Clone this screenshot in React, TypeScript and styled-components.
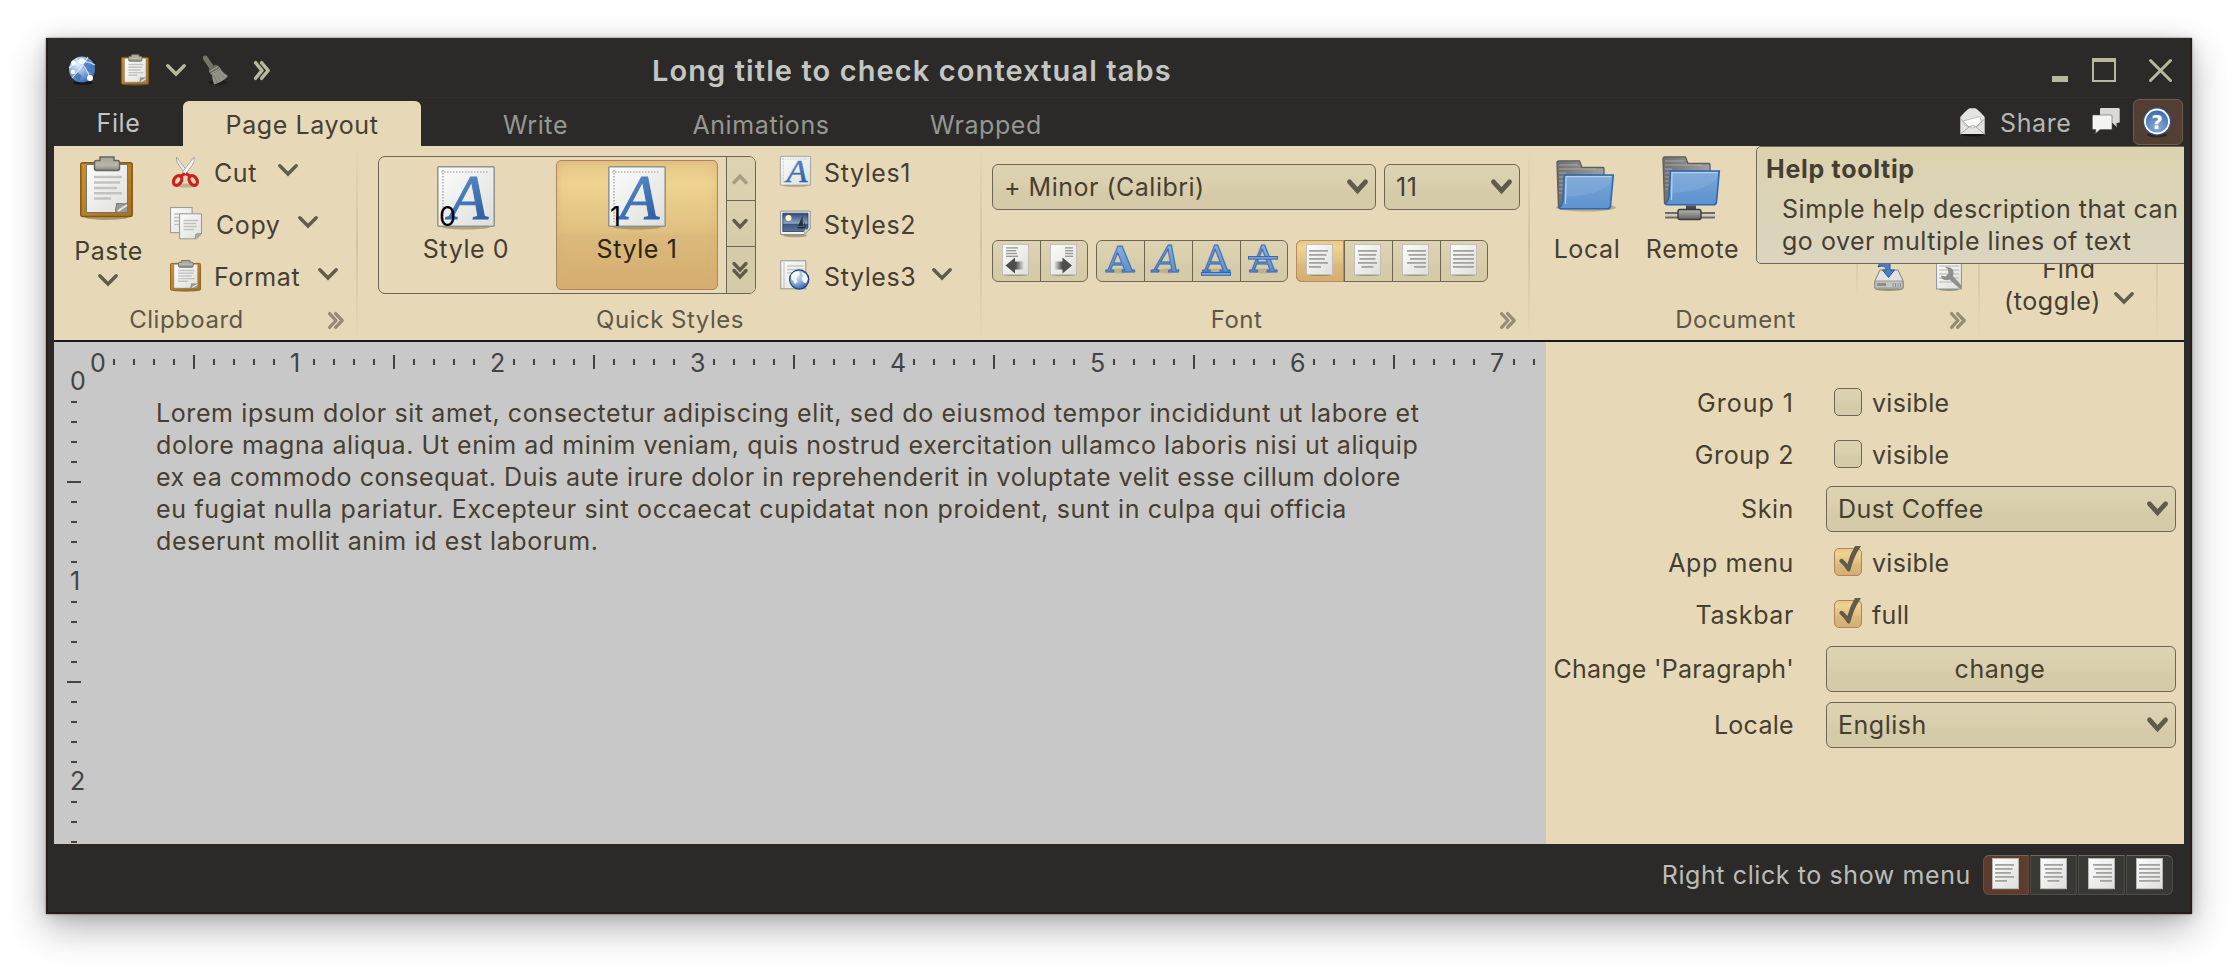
import React from "react";
import styled, { createGlobalStyle, css } from "styled-components";

const c = {
  frame: "#2b2a28",
  sand: "#e7d9b8",
  ink: "#463e31",
  inkSoft: "#5f5747",
  line: "#6e6553",
  arrow: "#615b4c",
  olive: "#b9b89c",
};

const GlobalStyle = createGlobalStyle`
  body {
    margin: 0;
    background: #fff;
    font-family: Inter, "Liberation Sans", sans-serif;
    font-size: 25px;
    line-height: 30px;
    letter-spacing: 0.6px;
    color: ${c.ink};
    overflow: hidden;
  }
  svg { display: block; flex: none; overflow: visible; }
`;

const raised = css`
  background: linear-gradient(#ddd2b1, #dbd0ae 40%, #d6cba8 65%, #d6cba9);
`;
const pressed = css`
  background: linear-gradient(#e6c887, #efd390 18%, #e0c080 55%, #dbba7d 58%, #d5ad6f);
`;

/* ---------- window frame ---------- */

const Desktop = styled.div`
  width: 2238px;
  height: 968px;
  box-sizing: border-box;
  padding: 38px 46px 54px;
`;
const Window = styled.main`
  height: 876px;
  box-sizing: border-box;
  padding: 0 6px;
  display: flex;
  flex-direction: column;
  background: ${c.frame};
  border: solid #261d18;
  border-width: 0 2px 2px;
  box-shadow: 0 14px 36px rgba(0, 0, 0, 0.3), 0 2px 14px rgba(0, 0, 0, 0.12), 0 0 2px rgba(0, 0, 0, 0.5);
`;

const TitleBar = styled.header`
  height: 60px;
  box-sizing: border-box;
  padding: 5px 12px 0 14px;
  display: flex;
  align-items: center;
  border-bottom: 1px solid #2f2e2c;
`;
const QuickTools = styled.div`
  width: 584px;
  display: grid;
  grid-template-columns: 53px 45px 35px 53px 16px;
  align-items: center;
`;
const Title = styled.h1`
  margin: 2px 0 0;
  font-size: 29px;
  line-height: 36px;
  font-weight: 600;
  letter-spacing: 1.1px;
  color: #c4c6c3;
`;
const WindowButtons = styled.div`
  margin-left: auto;
  display: grid;
  grid-template-columns: 40px 57px 23px;
`;

const TabRow = styled.nav`
  height: 48px;
  display: flex;
  align-items: flex-end;
`;
const Tab = styled.div<{ $w: number; $active?: boolean; $file?: boolean }>`
  width: ${(p) => p.$w}px;
  height: 45px;
  box-sizing: border-box;
  padding-top: ${(p) => (p.$file ? 7 : 9)}px;
  text-align: center;
  color: ${(p) => (p.$active ? c.ink : p.$file ? "#c3c5c2" : "#979793")};
  background: ${(p) => (p.$active ? c.sand : "transparent")};
  border-radius: 6px 6px 0 0;
`;
const TabTools = styled.div`
  margin-left: auto;
  height: 48px;
  display: flex;
  padding-right: 1px;
`;
const Share = styled.div`
  display: flex;
  align-items: flex-start;
  gap: 15px;
  padding-top: 10px;
  width: 132px;
  color: #b4b7b4;
`;
const Comments = styled.div`
  width: 41px;
  padding-top: 10px;
`;
const HelpButton = styled.div`
  width: 50px;
  height: 46px;
  margin-top: 1px;
  box-sizing: border-box;
  border: 1.5px solid #6f5b50;
  border-radius: 6px;
  background: linear-gradient(#513d33, #553f35 60%, #50402f);
  padding: 7px 0 0 8px;
`;

/* ---------- ribbon ---------- */

const Ribbon = styled.section`
  position: relative;
  overflow: hidden;
  height: 194px;
  display: flex;
  background: ${c.sand};
`;
const Group = styled.div<{ $w: number }>`
  width: ${(p) => p.$w}px;
  display: flex;
  flex-direction: column;
  background: linear-gradient(rgba(200, 184, 146, 0), #d2c5a0 50%, rgba(200, 184, 146, 0)) right / 2px 100% no-repeat;
`;
const GroupBody = styled.div<{ $pad?: number }>`
  height: 158px;
  padding-left: ${(p) => p.$pad ?? 0}px;
  display: flex;
`;
const GroupFooter = styled.div<{ $launcher?: boolean }>`
  display: flex;
  height: 32px;
  align-items: center;
  gap: 9px;
  padding-right: ${(p) => (p.$launcher ? 14 : 0)}px;
`;
const GroupLabel = styled.div`
  flex: 1;
  text-align: center;
  font-size: 24px;
  letter-spacing: 0.5px;
  color: ${c.inkSoft};
`;
const LauncherSlot = styled.div`
  width: 16px;
`;

const BigButton = styled.div<{ $w: number; $gap: number }>`
  width: ${(p) => p.$w}px;
  padding-top: 10px;
  display: flex;
  flex-direction: column;
  align-items: center;
  & > svg:first-child { margin-right: 3px; }
  & > span { margin: ${(p) => p.$gap}px 0 8px 1px; }
`;
const Stack = styled.div`
  display: flex;
  flex-direction: column;
  padding: 1px 0 0 8px;
`;
const StackItem = styled.div<{ $icon?: number; $arrowGap?: number }>`
  height: 52px;
  display: flex;
  align-items: center;
  & > svg:first-child { width: ${(p) => p.$icon ?? 31}px; margin: -3px 13px 0 0; }
  & > svg + span + svg { margin: -6px 0 0 ${(p) => p.$arrowGap ?? 17}px; }
`;

const Gallery = styled.div`
  width: 378px;
  height: 138px;
  box-sizing: border-box;
  margin: 10px 16px 0 20px;
  border: 1.5px solid ${c.line};
  border-radius: 7px;
  display: flex;
  overflow: hidden;
`;
const GalleryItem = styled.div<{ $on?: boolean }>`
  flex: none;
  width: 162px;
  height: 130px;
  box-sizing: border-box;
  margin: 3px 8px 0 0;
  border-radius: 5px;
  border: 1px solid transparent;
  padding-top: 5px;
  display: flex;
  flex-direction: column;
  align-items: center;
  ${(p) =>
    p.$on &&
    css`
      ${pressed}
      border-color: #b08460;
      color: #2c2414;
      box-shadow: inset 0 0 10px rgba(214, 174, 112, 0.7);
    `}
  &:first-child { margin: 3px 9px 0 6px; }
`;
const Thumb = styled.div`
  position: relative;
  width: 58px;
  height: 68px;
`;
const ThumbDigit = styled.span`
  position: absolute;
  left: 2px;
  top: 36px;
  color: #000;
  font-size: 27px;
`;
const GalleryScroll = styled.div`
  flex: 1;
  display: grid;
  grid-template-rows: 43px 46px 1fr;
  justify-items: center;
  align-items: center;
  border-left: 1.5px solid ${c.line};
  ${raised}
  & > div { width: 100%; height: 100%; display: grid; place-items: center; box-sizing: border-box; padding-right: 2px; }
  & > div + div { border-top: 1.5px solid ${c.line}; }
`;

const FontControls = styled.div`
  display: flex;
  flex-direction: column;
  gap: 30px;
  padding-top: 18px;
`;
const ControlRow = styled.div`
  display: flex;
  gap: 8px;
`;
const Field = styled.div<{ $w: number; $center?: boolean }>`
  width: ${(p) => p.$w}px;
  height: 46px;
  box-sizing: border-box;
  border: 1.5px solid ${c.line};
  border-radius: 6px;
  padding: 0 7px 1px ${(p) => (p.$center ? 5 : 11)}px;
  display: flex;
  align-items: center;
  justify-content: ${(p) => (p.$center ? "center" : "space-between")};
  letter-spacing: 0.5px;
  ${raised}
`;
const ButtonStrip = styled.div`
  height: 42px;
  box-sizing: border-box;
  display: flex;
  border: 1.5px solid ${c.line};
  border-radius: 6px;
  ${raised}
`;
const StripButton = styled.div<{ $on?: boolean }>`
  flex: none;
  width: 48px;
  box-sizing: border-box;
  padding: 3px 2px 0 0;
  display: flex;
  justify-content: center;
  &:first-child { width: ${(p) => (p.$on ? 48 : 47)}px; }
  &:last-child { width: 47px; }
  & + & { border-left: 1.5px solid ${c.line}; }
  ${(p) =>
    p.$on &&
    css`
      ${pressed}
      margin: -1px 0 -1px -1px;
      padding-top: 4px;
      border-radius: 6px 0 0 6px;
      box-shadow: inset 0 0 0 1px #b98a62;
    `}
`;

const DocTools = styled.div`
  margin-left: 115px;
  height: 154px;
  display: flex;
  align-items: flex-end;
  background: linear-gradient(rgba(200, 184, 146, 0), #cfc19c 60%, rgba(200, 184, 146, 0)) left / 2px 100% no-repeat;
  box-sizing: border-box;
  padding: 0 0 9px 18px;
  gap: 32px;
`;
const FindButton = styled.div`
  width: 100%;
  padding-top: 107px;
  display: flex;
  flex-direction: column;
  align-items: center;
`;
const FindLine = styled.div`
  display: flex;
  align-items: center;
  gap: 13px;
  height: 32px;
  & > svg { margin-top: -6px; }
`;

const Tooltip = styled.aside`
  position: absolute;
  left: 1702px;
  top: 0;
  width: 460px;
  height: 118px;
  box-sizing: border-box;
  border: 1.5px solid #6f6958;
  border-radius: 5px;
  padding: 7px 0 0 9px;
  background: linear-gradient(#dbd2ae, #dbd4b7 50%, #dbd5c1);
`;
const TooltipTitle = styled.div`
  font-weight: 700;
  letter-spacing: 0.7px;
`;
const TooltipText = styled.div`
  padding: 9px 0 0 16px;
  line-height: 32px;
  letter-spacing: 0.52px;
  white-space: nowrap;
`;

/* ---------- editor ---------- */

const Workspace = styled.section`
  flex: 1;
  display: flex;
  border-top: 2px solid #1b1a1c;
  overflow: hidden;
`;
const Page = styled.div`
  width: 1492px;
  background: #c8c8c8;
  overflow: hidden;
`;
const HRuler = styled.div`
  height: 30px;
  box-sizing: border-box;
  padding: 10px 0 0 30px;
  display: flex;
  align-items: center;
  color: #434343;
`;
const HCell = styled.div<{ $size: "number" | "big" | "small" }>`
  flex: none;
  width: 20px;
  display: flex;
  justify-content: center;
  ${(p) =>
    p.$size === "number"
      ? css`justify-content: flex-start; box-sizing: border-box; padding: 1px 0 0 6px; height: 30px;`
      : css`
          &::after { content: ""; width: 2px; height: ${p.$size === "big" ? 14 : 6}px; background: #434343; }
        `}
`;
const PageBody = styled.div`
  display: flex;
`;
const VRuler = styled.div`
  width: 102px;
  height: 472px;
  color: #434343;
`;
const VCell = styled.div<{ $size: "number" | "big" | "small" }>`
  height: 20px;
  display: flex;
  align-items: center;
  box-sizing: border-box;
  padding-left: ${(p) => (p.$size === "big" ? 13 : p.$size === "small" ? 17 : 16)}px;
  ${(p) =>
    p.$size === "number"
      ? css`line-height: 30px; padding-bottom: 2px;`
      : css`
          &::after { content: ""; height: 2px; width: ${p.$size === "big" ? 14 : 6}px; background: #434343; }
        `}
`;
const Paragraph = styled.div`
  padding-top: 25px;
  white-space: nowrap;
`;
const Line = styled.div<{ $track: number }>`
  line-height: 32px;
  letter-spacing: ${(p) => p.$track}px;
`;

const Settings = styled.form`
  flex: 1;
  margin: 0;
  background: ${c.sand};
  padding: 34px 8px 0 0;
  display: grid;
  grid-template-columns: 248px 350px;
  column-gap: 32px;
  grid-template-rows: 52px 52px 58px 48px 56px 54px 58px;
  align-content: start;
  align-items: center;
`;
const Label = styled.label<{ $field?: boolean; $track?: number }>`
  text-align: right;
  white-space: nowrap;
  letter-spacing: ${(p) => p.$track ?? 0.6}px;
  padding-top: ${(p) => (p.$field ? 0 : 2)}px;
`;
const CheckRow = styled.div`
  display: flex;
  align-items: center;
  gap: 10px;
  padding-left: 8px;
  letter-spacing: 0.3px;
  & > span { padding-top: 2px; }
`;
const Box = styled.div<{ $on?: boolean }>`
  width: 28px;
  height: 28px;
  box-sizing: border-box;
  border: 1.5px solid ${(p) => (p.$on ? "#b08460" : c.line)};
  border-radius: 5px;
  ${(p) => (p.$on ? pressed : raised)}
`;

/* ---------- status bar ---------- */

const StatusBar = styled.footer`
  height: 68px;
  box-sizing: border-box;
  padding: 11px 11px 0 0;
  display: flex;
  justify-content: flex-end;
  gap: 12px;
  color: #bbbdb9;
`;
const StatusText = styled.div`
  padding-top: 5px;
`;
const StatusStrip = styled.div`
  height: 40px;
  display: flex;
  gap: 1px;
`;
const StatusButton = styled.div<{ $on?: boolean }>`
  width: 47px;
  box-sizing: border-box;
  border: 1px solid ${(p) => (p.$on ? "#6b4b3d" : "#4e4d48")};
  border-top-color: #6d675f;
  background: ${(p) => (p.$on ? "#5e3c2d" : "#383834")};
  padding: 2px 0 0 9px;
  &:first-child { border-radius: 6px 0 0 6px; width: 46px; padding-left: 8px; }
  &:last-child { border-radius: 0 6px 6px 0; }
`;

/* ---------- drawings ---------- */

const Defs = () => (
  <svg width="0" height="0" style={{ position: "absolute" }}>
    <defs>
      <linearGradient id="paper" x1="0" y1="0" x2="1" y2="1">
        <stop offset="0" stopColor="#fdfdfd" /><stop offset="1" stopColor="#dededc" />
      </linearGradient>
      <linearGradient id="board" x1="0" y1="0" x2="1" y2="1">
        <stop offset="0" stopColor="#cd8f32" /><stop offset="1" stopColor="#a8701a" />
      </linearGradient>
      <linearGradient id="clip" x1="0" y1="0" x2="0" y2="1">
        <stop offset="0" stopColor="#a6a595" /><stop offset=".6" stopColor="#b9b8a8" /><stop offset="1" stopColor="#83837a" />
      </linearGradient>
      <linearGradient id="blueA" x1="0" y1="0" x2="0" y2="1">
        <stop offset="0" stopColor="#93b7e3" /><stop offset="1" stopColor="#5488cc" />
      </linearGradient>
      <linearGradient id="deepA" x1="0" y1="0" x2="0.4" y2="1">
        <stop offset="0" stopColor="#6a9bd4" /><stop offset="1" stopColor="#2c5fa3" />
      </linearGradient>
      <linearGradient id="folder" x1="0" y1="0" x2="0" y2="1">
        <stop offset="0" stopColor="#7ba7d6" /><stop offset="1" stopColor="#5c92cf" />
      </linearGradient>
      <linearGradient id="steel" x1="0" y1="0" x2="1" y2="0">
        <stop offset="0" stopColor="#6f6f6f" /><stop offset="1" stopColor="#a0a0a0" />
      </linearGradient>
      <linearGradient id="steelV" x1="0" y1="0" x2="0" y2="1">
        <stop offset="0" stopColor="#b5b5b5" /><stop offset="1" stopColor="#636363" />
      </linearGradient>
      <radialGradient id="sea" cx=".35" cy=".3" r=".8">
        <stop offset="0" stopColor="#e2eefb" /><stop offset=".5" stopColor="#86aedd" /><stop offset="1" stopColor="#2a5ba6" />
      </radialGradient>
      <radialGradient id="help" cx=".5" cy=".75" r=".8">
        <stop offset="0" stopColor="#88add8" /><stop offset="1" stopColor="#2f5f9f" />
      </radialGradient>
      <linearGradient id="sky" x1="0" y1="0" x2="0" y2="1">
        <stop offset="0" stopColor="#2c4574" /><stop offset=".55" stopColor="#8fa5c4" /><stop offset=".6" stopColor="#3b567f" /><stop offset="1" stopColor="#5c7699" />
      </linearGradient>
      <linearGradient id="fadeL"><stop offset="0" stopColor="#4d4e49" /><stop offset=".55" stopColor="#4d4e49" /><stop offset="1" stopColor="#4d4e49" stopOpacity="0" /></linearGradient>
      <linearGradient id="fadeR"><stop offset="0" stopColor="#4d4e49" stopOpacity="0" /><stop offset=".45" stopColor="#4d4e49" /><stop offset="1" stopColor="#4d4e49" /></linearGradient>
    </defs>
  </svg>
);

const Chevron = ({ color = c.arrow }: { color?: string }) => (
  <svg width="20" height="12" viewBox="0 0 20 12" fill="none" stroke={color} strokeWidth="3.4" strokeLinecap="round">
    <path d="M1.8 1.8 10 10 18.2 1.8" />
  </svg>
);
const FieldArrow = () => (
  <svg width="21" height="15" viewBox="0 0 21 15" fill="none" stroke={c.arrow} strokeWidth="4.8" strokeLinecap="round">
    <path d="M2.5 2.8 10.5 11.6 18.5 2.8" />
  </svg>
);
const More = ({ color, size = 17 }: { color: string; size?: number }) => (
  <svg width={16} height={size} viewBox="0 0 16 17" fill="none" stroke={color} strokeWidth="3.3" strokeLinecap="round" strokeLinejoin="round" preserveAspectRatio="none">
    <path d="M1.6 1.6 8 8.5 1.6 15.4M7.600 1.6 14.2 8.5 7.600 15.4" />
  </svg>
);
const Clipboard = ({ w, h }: { w: number; h: number }) => (
  <svg width={w} height={h} viewBox="0 0 53 64" preserveAspectRatio="none">
    <ellipse cx="26.5" cy="61" rx="22" ry="3" fill="#6b5a35" opacity=".5" />
    <rect x=".8" y="6.8" width="51.4" height="53.6" rx="2" fill="url(#board)" stroke="#835714" strokeWidth="1.5" />
    <path d="M6.5 8.5H47.5V48L39 56.5H6.5Z" fill="url(#paper)" stroke="#76736a" />
    <path d="M36 56.5H47.5V47C44 49 40 47 36.5 47.5 37 51 34.5 53 36 56.5Z" fill="#9a9a96" stroke="#77756d" />
    <path d="M38 55 47 49" stroke="#e8e8e6" strokeWidth="2" />
    <path d="M14 21H42M14 26.500H40M14 32H37M14 37.200H42M14 42.500H31" stroke="#c3c3c2" strokeWidth="2.6" />
    <path d="M20 1H34V4.500H37.500Q39.500 4.500 39.500 6.500V12.500Q39.500 14.500 37.500 14.500H16.500Q14.500 14.500 14.500 12.500V6.500Q14.500 4.500 16.500 4.500H20Z" fill="url(#clip)" stroke="#66655c" strokeWidth="1.5" />
  </svg>
);
const Scissors = () => (
  <svg width="31" height="32" viewBox="0 0 31 32">
    <ellipse cx="16" cy="29.500" rx="10" ry="2" fill="#8d8160" opacity=".45" />
    <path d="M6.500 1Q5.500 5 9 9.500L16 19 18 16Z" fill="#e9e9e8" stroke="#989894" strokeWidth=".8" />
    <path d="M24 1Q25.500 5 22 9.500L14.500 19.500 12.500 16Z" fill="#f4f4f3" stroke="#989894" strokeWidth=".8" />
    <g fill="none" stroke="#cc1f1f" strokeWidth="3.200">
      <ellipse cx="7.600" cy="24.500" rx="3.700" ry="5.200" transform="rotate(32 7.600 24.500)" />
      <ellipse cx="23.200" cy="24.500" rx="3.700" ry="5.200" transform="rotate(-32 23.200 24.500)" />
      <path d="M11 20 15 17.500M19.800 20 15.800 17.500" />
    </g>
  </svg>
);
const CopyIcon = () => (
  <svg width="33" height="33" viewBox="0 0 33 33">
    <rect x=".6" y=".6" width="21.500" height="25" fill="url(#paper)" stroke="#97968f" />
    <path d="M4 7H12M4 10.500H11M4 14H12M4 17.500H10" stroke="#c0c0be" strokeWidth="1.500" />
    <path d="M9.600 6.800H31.500V27L26.500 31.800H9.600Z" fill="url(#paper)" stroke="#97968f" />
    <path d="M25 31.500 26 27 31 26.500Z" fill="#b5b5b1" stroke="#8a8a84" strokeWidth=".8" />
    <path d="M13.500 13.500H28M13.500 16.500H26M13.500 19.500H27M13.500 22.500H24" stroke="#c0c0be" strokeWidth="1.500" />
  </svg>
);
const Globe = () => (
  <svg width="30" height="30" viewBox="0 0 30 30">
    <ellipse cx="15" cy="28" rx="10" ry="1.800" fill="#000" opacity=".5" />
    <circle cx="14" cy="14.500" r="13" fill="url(#sea)" />
    <path d="M15 8 20 4.500 25 8 26.500 13 23 17.500 19 16 15 12ZM5 20 10 17.500 14 21 11.500 25.500Q7 24 5 20Z" fill="#3d71b8" opacity=".75" />
    <path d="M1 13Q14 2 27 10M4 23Q14 12 20 2M8 4Q20 12 22 25" fill="none" stroke="#e6f0fc" strokeWidth="1.100" opacity=".85" />
    <g fill="#fff"><circle cx="5.500" cy="8" r="2.400" /><circle cx="14" cy="6" r="2.800" /><circle cx="22" cy="23" r="3" /><circle cx="5" cy="17" r="2.200" /></g>
  </svg>
);
const Broom = () => (
  <svg width="28" height="31" viewBox="0 0 28 31">
    <ellipse cx="17" cy="27.500" rx="10" ry="2.500" fill="#111" opacity=".5" />
    <path d="M2.500 1Q5.500-.5 6.500 2L13.500 12 9 14.500 2 4Q1.500 2 2.500 1Z" fill="#787468" />
    <path d="M8 13.500 14.500 9.500Q19 11 20.500 15L11 20.500Q7.500 18 8 13.500Z" fill="#6c695e" />
    <path d="M11 19 19.500 14.500Q23 18.500 27 21 22 27 13 29.500 11 24 11 19Z" fill="#96938a" />
    <path d="M13 20 16 28M15.500 19 20 26.500M18 17.500 24 23.500" stroke="#7f7c72" strokeWidth="1" />
    <path d="M8.500 16.500 17 11.500M10 18.500 19 13.500" stroke="#a5a298" strokeWidth="1" />
  </svg>
);
const StyleIcon = ({ w = 58, h = 64 }: { w?: number; h?: number }) => (
  <svg width={w} height={h} viewBox="0 0 58 64" preserveAspectRatio="none">
    <ellipse cx="29" cy="61" rx="24" ry="2.500" fill="#7c6d45" opacity=".5" />
    <rect x=".8" y=".8" width="56.400" height="59.400" rx="1" fill="url(#paper)" stroke="#8f9390" strokeWidth="1.500" />
    <path d="M4 6H52M6 4V56" stroke="#9a9a9a" strokeWidth="1.200" strokeDasharray="1.500 1.500" fill="none" />
    <text x="12" y="53" fontFamily="Liberation Serif" fontStyle="italic" fontSize="64" letterSpacing="0" fill="url(#deepA)" stroke="url(#deepA)" strokeWidth="1.100">A</text>
  </svg>
);
const PictureIcon = () => (
  <svg width="31" height="28" viewBox="0 0 31 28">
    <ellipse cx="15" cy="25.500" rx="12" ry="1.800" fill="#6c6145" opacity=".5" />
    <path d="M.6 1.100H30.200V19L24.500 24.500H.6Z" fill="#f4f4f2" stroke="#8f8f88" />
    <path d="M2.800 3.200H28V18L23.500 21.500H2.800Z" fill="url(#sky)" stroke="#263e66" strokeWidth=".8" />
    <circle cx="8.500" cy="8" r="3" fill="#fbfbc9" />
    <path d="M18 16 22.500 6 23 16ZM23.500 10 26 17H17L18 18.500H25" fill="#26303f" />
    <path d="M24 24.500 25 19.500 30 19Z" fill="#ddd" stroke="#999" strokeWidth=".7" />
  </svg>
);
const WebDocIcon = () => (
  <svg width="31" height="31" viewBox="0 0 31 31">
    <rect x=".8" y=".8" width="25" height="28" fill="url(#paper)" stroke="#96968f" />
    <path d="M4 2V28M7 6H23M7 9.500H23M7 13H23" stroke="#c9c9c7" strokeWidth="1.300" />
    <circle cx="19.200" cy="19.500" r="9.600" fill="url(#sea)" stroke="#2a3e80" strokeWidth="1.200" />
    <path d="M11 15 14 12 19 11 20 13.500 17.500 17 16 18 17.500 22 15 24 13.500 21 11 18.500ZM21 12 26 14 28 19 26 23.500 23 22 21.500 18 23 16Z" fill="#f4f8fd" />
  </svg>
);
type Align = "left" | "center" | "right" | "justify";
const widths = [19, 17.5, 16, 19, 12];
const DocIcon = ({ align }: { align: Align }) => (
  <svg width="27" height="32" viewBox="0 0 27 32">
    <ellipse cx="13.500" cy="30.800" rx="12" ry="1.300" fill="#4a452f" opacity=".45" />
    <rect x=".4" y=".4" width="26.200" height="30.400" fill="url(#paper)" stroke="#b8b8b4" strokeWidth=".8" />
    {widths.map((v, i) => {
      const w = align === "justify" ? 21 : v;
      const x = align === "right" ? 24 - w : align === "center" ? 13.5 - w / 2 : 3;
      return <rect key={i} x={x} y={6 + i * 4} width={w} height="1.800" fill="#a3a3a2" />;
    })}
  </svg>
);
const IndentIcon = ({ dir }: { dir: "left" | "right" }) => (
  <svg width="27" height="32" viewBox="0 0 27 32">
    <ellipse cx="13.500" cy="30.800" rx="12" ry="1.300" fill="#4a452f" opacity=".45" />
    <rect x=".4" y=".4" width="26.200" height="30.400" fill="url(#paper)" stroke="#b8b8b4" strokeWidth=".8" />
    {[12, 10, 11, 12].map((w, i) => (
      <rect key={i} x={dir === "left" ? 4 : 15} y={3.2 + i * 2.8} width={dir === "left" ? w : 8} height="1.400" fill="#9a9a98" />
    ))}
    {dir === "left" ? (
      <path d="M3.500 21.500 13 13.500V17.500H22V25.500H13V29.500Z" fill="url(#fadeL)" />
    ) : (
      <path d="M22 21.500 12.500 13.500V17.500H4V25.500H12.500V29.500Z" fill="url(#fadeR)" />
    )}
  </svg>
);
const LetterIcon = ({ kind }: { kind: "bold" | "italic" | "underline" | "strike" }) => (
  <svg width="32" height="33" viewBox="0 0 32 33">
    <ellipse cx="16" cy="27" rx="10" ry="2.500" fill="#a39870" opacity=".5" />
    <text
      x={kind === "italic" ? 15 : 16} y={27.5} textAnchor="middle" letterSpacing="0"
      fontFamily="DejaVu Serif, serif"
      fontWeight={kind === "bold" ? 700 : 400}
      fontStyle={kind === "italic" ? "italic" : "normal"}
      fontSize={kind === "bold" ? 36 : 37} fill="url(#blueA)" stroke="#3a6cb0" strokeWidth={kind === "bold" ? 1 : 1.1}
    >A</text>
    {kind === "underline" && <rect x="1.500" y="28.500" width="29" height="2.800" fill="#7ba5da" stroke="#2f62aa" strokeWidth=".9" />}
    {kind === "strike" && <rect x="1.500" y="12.500" width="29" height="2.600" fill="#7ba5da" stroke="#2f62aa" strokeWidth=".9" />}
  </svg>
);
const FolderIcon = ({ remote }: { remote?: boolean }) => (
  <svg width="58" height="64" viewBox="0 0 58 64">
    <g transform={remote ? undefined : "translate(0 4)"}>
      {!remote && <ellipse cx="30" cy="47.500" rx="30" ry="4" fill="#8e7f55" opacity=".5" />}
      <path d="M1 3Q1 .8 3 .8H23.500L26 7.500H47Q48 7.500 48 9V40H8L5 48.500 2.500 47.500Z" fill="url(#steel)" stroke="#5d5d5d" strokeWidth="1.300" />
      <path d="M3 5H22M3 9H40M3 13H10M3 17H7M3 21H7M3 25H7M3 29H7M3 33H6" stroke="#bcbcbc" strokeWidth="1" opacity=".7" />
      <path d="M8.500 15H57.300L54.500 46Q54 48.800 51.500 48.800H5Q3 48.800 4 46.500 6.500 45 7 40Z" fill="url(#folder)" stroke="#2f66b0" strokeWidth="1.600" />
      <path d="M9.700 16.500H55.500L55 22Q44 36 9 36.500Z" fill="#94b9e2" opacity=".3" />
      <path d="M9.500 44 10 16.700H55.500" fill="none" stroke="#b4d0ef" strokeWidth="1.300" />
    </g>
    {remote && (
      <g>
        <rect x="24" y="49.500" width="10" height="5" fill="#4c4c4c" />
        <path d="M3 57H53M3 61.500H53" stroke="#6b6b66" strokeWidth="2" />
        <path d="M3 59.200H53" stroke="#c9c9c4" strokeWidth="1.500" />
        <rect x="16" y="53.500" width="23" height="10" rx="2" fill="url(#steelV)" stroke="#3c3c3c" strokeWidth="1.400" />
      </g>
    )}
  </svg>
);
const DiskIcon = () => (
  <svg width="30" height="32" viewBox="0 0 30 32">
    <ellipse cx="15" cy="30.500" rx="13" ry="1.500" fill="#5d5232" opacity=".5" />
    <path d="M6 11H24L29.200 22V29Q29.200 30 28 30H2Q.8 30 .8 29V22Z" fill="#e2e2e0" stroke="#85857e" />
    <path d="M1 22H29V29H1Z" fill="#c4c4c1" stroke="#8b8b85" strokeWidth=".8" />
    <path d="M19 24V28M21.500 24V28M24 24V28M26.500 24V28" stroke="#8b8b88" />
    <rect x="3" y="24" width="9" height="3" fill="#8c8c8a" />
    <path d="M4 8Q6 0 16 3V11H20.500L14.500 18.500 8.500 11H12.500Q11 5 4 8Z" fill="#4a7fc3" stroke="#2b5594" />
  </svg>
);
const WrenchIcon = () => (
  <svg width="26" height="32" viewBox="0 0 26 32">
    <ellipse cx="13" cy="30.500" rx="10" ry="1.500" fill="#4a452f" opacity=".5" />
    <rect x=".6" y=".6" width="24.800" height="29.400" fill="url(#paper)" stroke="#8b949a" />
    <path d="M3 7H23M3 11H23M3 15H23M3 19H23M3 23H23" stroke="#c6c6c4" strokeWidth="1.500" />
    <path d="M9 8Q15 7.500 17 11 18.500 14.500 17 17L25 26V30L23 29 13.500 20.500Q9 22.500 5.500 19L5 16.500 9.500 17.500 12.500 14.500 12 10.500Z" fill="#8f8f8d" />
  </svg>
);
const Envelope = () => (
  <svg width="25" height="29" viewBox="0 0 25 29">
    <ellipse cx="12.500" cy="27" rx="11" ry="1.500" fill="#000" opacity=".5" />
    <path d="M.3 9Q8 .3 10 .3H15Q17 .3 24.700 9V26H.3Z" fill="#e3e3e1" />
    <path d="M3 13 20 8.500 22 16 12.500 20 4.500 17Z" fill="#fbfbfa" stroke="#b0b0ac" strokeWidth=".8" />
    <path d="M.5 11 9 19 .5 26M24.500 11 16 19 24.500 26M8 19Q12.500 16 17 19" fill="none" stroke="#a9a9a5" strokeWidth="1" />
  </svg>
);
const CommentsIcon = () => (
  <svg width="28" height="26" viewBox="0 0 28 26">
    <path d="M8 1Q8 0 9 0H26.500Q27.700 0 27.700 1V14.500L24.500 15 24.800 19 20.500 15H8Z" fill="#d9d9d7" />
    <path d="M.4 8Q.4 7 1.500 7H19Q20 7 20 8V20.500Q20 21.500 19 21.500H8L3.500 25.500 4 21.500H1.500Q.4 21.500 .4 20.500Z" fill="#f4f4f3" stroke="#5c5c5a" strokeWidth=".6" />
  </svg>
);
const HelpIcon = () => (
  <svg width="30" height="31" viewBox="0 0 30 31">
    <ellipse cx="15" cy="28" rx="10" ry="2.500" fill="#1c1410" opacity=".6" />
    <circle cx="15" cy="14.500" r="13.200" fill="url(#help)" stroke="#2a5391" strokeWidth="1.600" />
    <circle cx="15" cy="14.500" r="12" fill="none" stroke="#fff" strokeWidth="1.800" />
    <text x="15" y="22" textAnchor="middle" fontFamily="DejaVu Sans" fontWeight="700" fontSize="20" letterSpacing="0" fill="#fff">?</text>
  </svg>
);
const CheckMark = () => (
  <svg width="26" height="26" viewBox="0 0 26 26">
    <path d="M4.300 12.500Q4.500 8.500 8 10.200L12.500 15Q15 5 20-3H26Q18.500 8 15.500 21 14 24 12 21.500 8.500 16 4.300 12.500Z" fill={c.arrow} />
  </svg>
);

/* ---------- page ---------- */

const lines = [
  { track: 0.6, text: "Lorem ipsum dolor sit amet, consectetur adipiscing elit, sed do eiusmod tempor incididunt ut labore et" },
  { track: 0.57, text: "dolore magna aliqua. Ut enim ad minim veniam, quis nostrud exercitation ullamco laboris nisi ut aliquip" },
  { track: 0.55, text: "ex ea commodo consequat. Duis aute irure dolor in reprehenderit in voluptate velit esse cillum dolore" },
  { track: 0.67, text: "eu fugiat nulla pariatur. Excepteur sint occaecat cupidatat non proident, sunt in culpa qui officia" },
  { track: 0.6, text: "deserunt mollit anim id est laborum." },
];
const kinds: Align[] = ["left", "center", "right", "justify"];
const sizeOf = (i: number) => (i % 10 === 0 ? "number" : i % 5 === 0 ? "big" : "small");

const Check = ({ label, on }: { label: string; on?: boolean }) => (
  <CheckRow>
    <Box $on={on}>{on && <CheckMark />}</Box>
    <span>{label}</span>
  </CheckRow>
);

const Footer = ({ label, launcher }: { label: string; launcher?: boolean }) => (
  <GroupFooter $launcher={launcher}>
    <GroupLabel>{label}</GroupLabel>
    {launcher && (
      <LauncherSlot>
        <More color="#968c75" />
      </LauncherSlot>
    )}
  </GroupFooter>
);

export default function App() {
  return (
    <Desktop>
      <GlobalStyle />
      <Defs />
      <Window>
        <TitleBar>
          <QuickTools>
            <Globe />
            <Clipboard w={28} h={32} />
            <Chevron color={c.olive} />
            <Broom />
            <More color={c.olive} size={19} />
          </QuickTools>
          <Title>Long title to check contextual tabs</Title>
          <WindowButtons>
            <svg width="16" height="24"><rect y="18" width="16" height="6" fill={c.olive} /></svg>
            <svg width="24" height="24"><path d="M0 0H24V24H0ZM2 4V22H22V4Z" fillRule="evenodd" fill={c.olive} /></svg>
            <svg width="23" height="24" stroke={c.olive} strokeWidth="3" strokeLinecap="round"><path d="M1.500 2.500 21.500 22.500M21.500 2.500 1.500 22.500" /></svg>
          </WindowButtons>
        </TitleBar>

        <TabRow>
          <Tab $w={129} $file>File</Tab>
          <Tab $w={238} $active>Page Layout</Tab>
          <Tab $w={229}>Write</Tab>
          <Tab $w={222}>Animations</Tab>
          <Tab $w={228}>Wrapped</Tab>
          <TabTools>
            <Share><Envelope /><span>Share</span></Share>
            <Comments><CommentsIcon /></Comments>
            <HelpButton><HelpIcon /></HelpButton>
          </TabTools>
        </TabRow>

        <Ribbon>
          <Group $w={304}>
            <GroupBody>
              <BigButton $w={108} $gap={16}>
                <Clipboard w={53} h={64} />
                <span>Paste</span>
                <Chevron />
              </BigButton>
              <Stack>
                <StackItem $arrowGap={21}><Scissors /><span>Cut</span><Chevron /></StackItem>
                <StackItem $icon={33}><CopyIcon /><span>Copy</span><Chevron /></StackItem>
                <StackItem $arrowGap={18}><Clipboard w={27} h={32} /><span>Format</span><Chevron /></StackItem>
              </Stack>
            </GroupBody>
            <Footer label="Clipboard" launcher />
          </Group>

          <Group $w={624}>
            <GroupBody>
              <Gallery>
                <GalleryItem>
                  <Thumb><StyleIcon /><ThumbDigit>0</ThumbDigit></Thumb>
                  <span>Style 0</span>
                </GalleryItem>
                <GalleryItem $on>
                  <Thumb><StyleIcon /><ThumbDigit>1</ThumbDigit></Thumb>
                  <span>Style 1</span>
                </GalleryItem>
                <GalleryScroll>
                  <div>
                    <svg width="16" height="10" fill="none" stroke="#a89d83" strokeWidth="3.400" strokeLinecap="round"><path d="M2 8.500 8 2.300 14 8.500" /></svg>
                  </div>
                  <div>
                    <svg width="16" height="10" fill="none" stroke={c.arrow} strokeWidth="3.400" strokeLinecap="round"><path d="M2 1.500 8 8 14 1.500" /></svg>
                  </div>
                  <div>
                    <svg width="16" height="17" fill="none" stroke={c.arrow} strokeWidth="3.400" strokeLinecap="round"><path d="M2 1.500 8 8 14 1.500M2 8.500 8 15 14 8.500" /></svg>
                  </div>
                </GalleryScroll>
              </Gallery>
              <Stack>
                <StackItem><StyleIcon w={29} h={31} /><span>Styles1</span></StackItem>
                <StackItem><PictureIcon /><span>Styles2</span></StackItem>
                <StackItem $arrowGap={16}><WebDocIcon /><span>Styles3</span><Chevron /></StackItem>
              </Stack>
            </GroupBody>
            <Footer label="Quick Styles" />
          </Group>

          <Group $w={548}>
            <GroupBody $pad={10}>
              <FontControls>
                <ControlRow>
                  <Field $w={384}><span>+ Minor (Calibri)</span><FieldArrow /></Field>
                  <Field $w={136}><span>11</span><FieldArrow /></Field>
                </ControlRow>
                <ControlRow>
                  <ButtonStrip>
                    <StripButton><IndentIcon dir="left" /></StripButton>
                    <StripButton><IndentIcon dir="right" /></StripButton>
                  </ButtonStrip>
                  <ButtonStrip>
                    <StripButton><LetterIcon kind="bold" /></StripButton>
                    <StripButton><LetterIcon kind="italic" /></StripButton>
                    <StripButton><LetterIcon kind="underline" /></StripButton>
                    <StripButton><LetterIcon kind="strike" /></StripButton>
                  </ButtonStrip>
                  <ButtonStrip>
                    {kinds.map((k, i) => (
                      <StripButton key={k} $on={i === 0}><DocIcon align={k} /></StripButton>
                    ))}
                  </ButtonStrip>
                </ControlRow>
              </FontControls>
            </GroupBody>
            <Footer label="Font" launcher />
          </Group>

          <Group $w={450}>
            <GroupBody>
              <BigButton $w={113} $gap={14}><FolderIcon /><span>Local</span></BigButton>
              <BigButton $w={98} $gap={14}><FolderIcon remote /><span>Remote</span></BigButton>
              <DocTools><DiskIcon /><WrenchIcon /></DocTools>
            </GroupBody>
            <Footer label="Document" launcher />
          </Group>

          <Group $w={178}>
            <FindButton>
              <FindLine>Find</FindLine>
              <FindLine><span>(toggle)</span><Chevron /></FindLine>
            </FindButton>
          </Group>

          <Tooltip>
            <TooltipTitle>Help tooltip</TooltipTitle>
            <TooltipText>
              Simple help description that can
              <br />
              go over multiple lines of text
            </TooltipText>
          </Tooltip>
        </Ribbon>

        <Workspace>
          <Page>
            <HRuler>
              {Array.from({ length: 73 }, (_, i) => (
                <HCell key={i} $size={sizeOf(i)}>{i % 10 === 0 && i / 10}</HCell>
              ))}
            </HRuler>
            <PageBody>
              <VRuler>
                {Array.from({ length: 24 }, (_, i) => (
                  <VCell key={i} $size={sizeOf(i)}>{i % 10 === 0 && i / 10}</VCell>
                ))}
              </VRuler>
              <Paragraph>
                {lines.map((l) => <Line key={l.text} $track={l.track}>{l.text}</Line>)}
              </Paragraph>
            </PageBody>
          </Page>
          <Settings>
            <Label $track={1}>Group 1</Label><Check label="visible" />
            <Label>Group 2</Label><Check label="visible" />
            <Label $field>Skin</Label><Field $w={350}><span>Dust Coffee</span><FieldArrow /></Field>
            <Label>App menu</Label><Check label="visible" on />
            <Label>Taskbar</Label><Check label="full" on />
            <Label $field $track={0.25}>Change 'Paragraph'</Label><Field $w={350} $center>change</Field>
            <Label $field $track={0.3}>Locale</Label><Field $w={350}><span>English</span><FieldArrow /></Field>
          </Settings>
        </Workspace>

        <StatusBar>
          <StatusText>Right click to show menu</StatusText>
          <StatusStrip>
            {kinds.map((k, i) => (
              <StatusButton key={k} $on={i === 0}><DocIcon align={k} /></StatusButton>
            ))}
          </StatusStrip>
        </StatusBar>
      </Window>
    </Desktop>
  );
}
